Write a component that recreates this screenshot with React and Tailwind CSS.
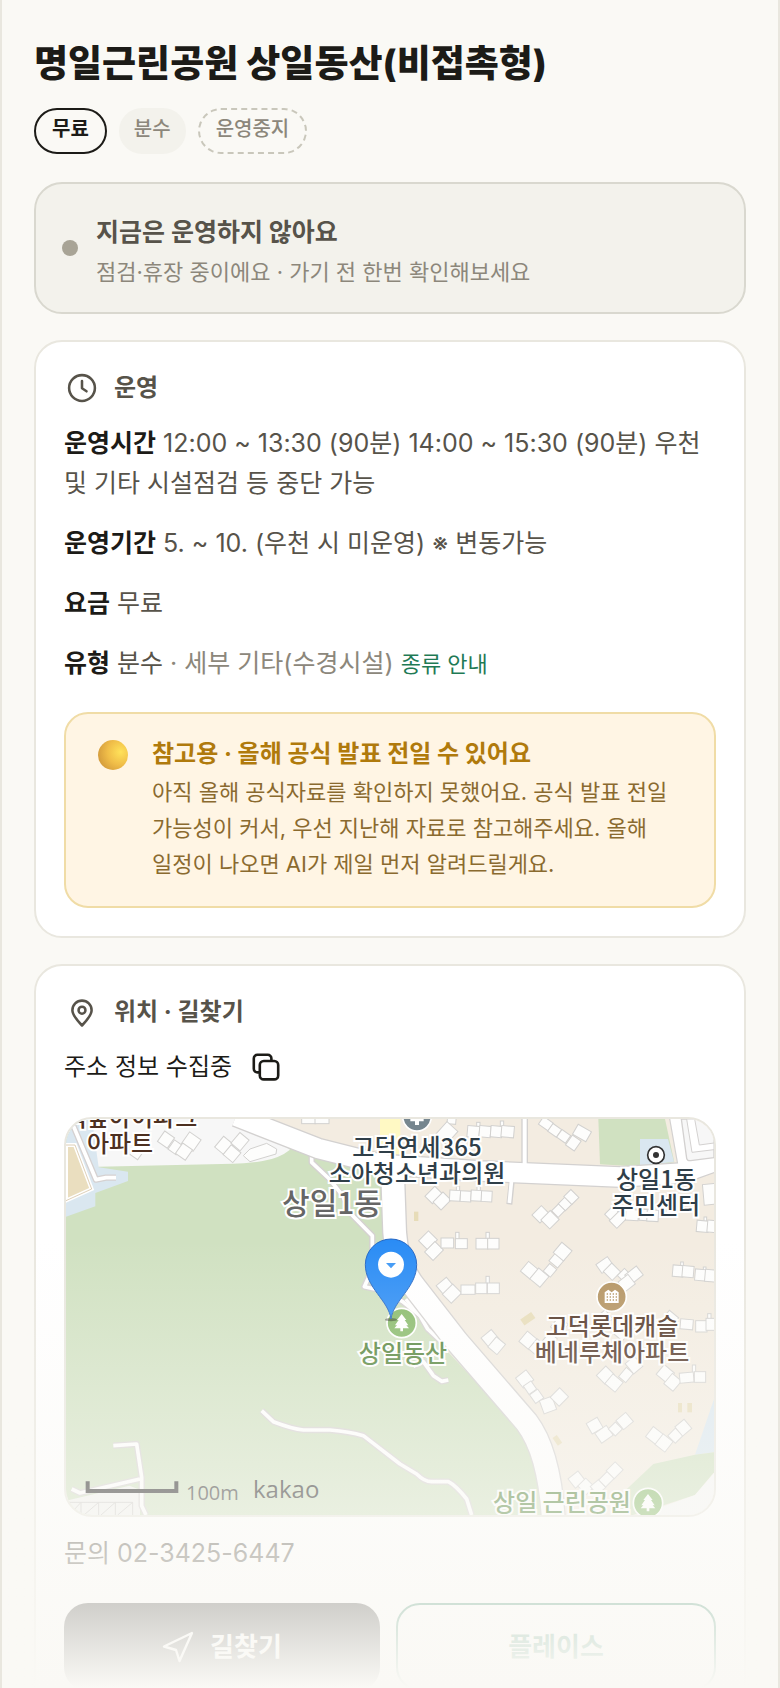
import React from "react";

// [cx, cy, width, height, rotation]
const buildings = [
    [300, 62, 36, 38, 35], [328, 85, 30, 34, 35], [376, 68, 42, 42, 35], [354, 98, 36, 38, 35],
    [474, 80, 38, 42, 40], [522, 68, 36, 42, 40], [498, 104, 38, 38, 40], [212, 102, 28, 30, 35],
    [728, 4, 42, 20, 0], [768, 4, 42, 20, 0],
    [1157, 2, 26, 26, 5], [1142, 42, 52, 44, -48],
    [1222, 38, 36, 34, 5], [1257, 38, 34, 34, 5], [1291, 38, 34, 34, 5], [1325, 38, 38, 34, 5],
    [1440, 14, 36, 28, 35], [1466, 34, 32, 28, 35], [1493, 52, 32, 28, 35], [1522, 72, 32, 36, 35], [1548, 42, 46, 34, 30],
    [1103, 228, 32, 42, 45], [1128, 246, 34, 42, 45],
    [1167, 230, 32, 32, 3], [1199, 232, 32, 32, 3], [1231, 230, 32, 32, 3], [1262, 232, 32, 32, 3],
    [1424, 286, 34, 40, 45], [1452, 302, 38, 40, 45], [1478, 274, 32, 28, -45], [1498, 254, 30, 30, -45], [1516, 234, 34, 30, 45],
    [1640, 286, 34, 34, 45], [1656, 302, 32, 42, 45], [1698, 288, 38, 32, 3], [1738, 288, 36, 34, 3], [1760, 290, 34, 34, 3],
    [1910, 322, 36, 34, 5], [1938, 322, 28, 36, 5], [1932, 226, 40, 62, -5],
    [1086, 364, 42, 38, -45], [1104, 396, 36, 44, 45], [1144, 372, 38, 30, 0], [1186, 374, 36, 30, 0],
    [1248, 374, 36, 32, 0], [1282, 374, 34, 32, 0],
    [1390, 454, 38, 38, 40], [1420, 476, 40, 42, 40], [1452, 454, 30, 28, -50], [1472, 424, 32, 34, -50], [1490, 398, 40, 40, 40],
    [1616, 438, 42, 32, -35], [1638, 458, 38, 36, 45], [1676, 470, 32, 30, 45], [1704, 468, 44, 34, -38], [1682, 492, 38, 36, -38],
    [1836, 456, 32, 34, 5], [1866, 458, 34, 34, 5], [1904, 468, 34, 34, 5], [1932, 470, 30, 36, 5],
    [1138, 502, 40, 38, -40], [1158, 524, 38, 44, 45], [1206, 512, 42, 28, 0], [1246, 508, 34, 32, 0], [1282, 508, 36, 32, 0],
    [1272, 658, 40, 36, -40], [1292, 680, 36, 40, 40],
    [1386, 664, 38, 40, 40], [1414, 686, 36, 40, 40], [1450, 664, 38, 30, -50], [1480, 620, 36, 40, 40],
    [1612, 600, 44, 36, -40], [1666, 640, 38, 36, 40],
    [1810, 602, 36, 44, 40], [1862, 616, 38, 30, 5], [1906, 622, 34, 34, 0], [1934, 616, 28, 36, 0],
    [1376, 780, 40, 38, -38], [1392, 806, 28, 30, -35], [1412, 832, 30, 32, -35], [1446, 858, 40, 42, -20], [1480, 834, 38, 40, 45],
    [1618, 768, 36, 40, 45], [1644, 792, 40, 38, 40], [1680, 768, 36, 28, -50], [1704, 738, 36, 40, -40],
    [1798, 764, 40, 38, 40], [1820, 790, 36, 40, 40], [1862, 776, 42, 30, -5], [1902, 774, 34, 32, 0],
    [1586, 920, 38, 36, -30], [1614, 946, 42, 36, -35], [1648, 930, 30, 30, -45], [1676, 906, 38, 36, -40],
    [1766, 950, 40, 38, 38], [1794, 972, 38, 40, 38], [1828, 950, 32, 32, -45], [1852, 926, 36, 36, -40],
    [1532, 1082, 38, 36, -38], [1560, 1102, 36, 34, 45], [1596, 1104, 34, 32, -40], [1622, 1080, 38, 30, -45], [1646, 1054, 34, 38, 45],
];

const chimneys = [
    [1237, 22, 10, 24], [1308, 18, 10, 24], [1176, 212, 10, 20], [1238, 212, 10, 20],
    [1174, 352, 10, 24], [1265, 352, 10, 24], [1265, 484, 10, 24], [1884, 760, 10, 44], [1930, 604, 10, 40],
    [1848, 440, 8, 22], [1916, 454, 8, 20], [1918, 304, 8, 20],
];

const trails = [
    "M737 105V130L790 180L830 230L852 282L919 350V450L895 503L950 515L1010 548L1062 590",
    "M1020 540L1062 590L1085 630L1130 672",
    "M1042 742L1072 728L1102 770L1127 787L1147 783",
    "M587 875L622 908Q680 930 712 933H792Q850 938 892 950L1002 1035L1052 1065Q1075 1088 1097 1088H1147Q1170 1100 1202 1140L1217 1188",
    "M142 980L212 975L227 1075V1160L240 1188",
    "M17 1110L42 1122L222 1080",
    "M22 20L90 182L120 176H150",
];

const labelClass = "absolute -translate-x-1/2 whitespace-nowrap text-center font-medium text-2xl leading-[26px] [-webkit-text-stroke:4px_white] [paint-order:stroke_fill]";

function Tree({ x, y }) {
    return (
        <g transform={`translate(${x} ${y})`}>
            <circle r="44" fill="#86b968" stroke="#fff" strokeWidth="5" />
            <path d="M0 -27L14 -9H9L20 7H14L22 16H4V25H-4V16H-22L-14 7H-20L-9 -9H-14Z" fill="#fff" />
        </g>
    );
}

function MapDrawing() {
    return (
        <svg viewBox="0 0 1944 1188" preserveAspectRatio="xMidYMid slice" className="block h-full w-full" aria-hidden="true">
            <rect width="1944" height="1188" fill="#f3ece1" />

            {/* ground */}
            <path d="M0 0H700L735 105L950 150L960 360L1000 480L1147 700L1352 920Q1417 1010 1432 1188H0Z" fill="#d0e1c1" />
            <path d="M0 0H560L672 92Q640 118 590 126T500 134L95 143Z" fill="#f7f7f7" />
            <path d="M0 0H78L98 145L186 158V186L88 222V262L0 293Z" fill="#dae7f0" />
            <path d="M0 78H27L77 210L0 245Z" fill="#eadebf" stroke="#fff" strokeWidth="12" />
            <path d="M0 78H27L77 210L0 245" fill="none" stroke="#cdb896" strokeWidth="2" />
            <path d="M560 -10L780 75L950 122V-10Z" fill="#f3ece1" />
            <path d="M942 0H1003V112L942 95Z" fill="#fff9c4" />
            <path d="M1597 0H1797L1825 130L1700 142L1602 136Z" fill="#d0e1c1" />
            <path d="M1722 60H1806L1824 128L1722 140Z" fill="#dae7f0" />
            <path d="M1887 1007L1944 840V1000Z" fill="#dae7f0" />
            <path d="M1677 1115L1762 1035L1887 1007L1944 1000V1060L1887 1128L1742 1175L1700 1188H1640Z" fill="#d0e1c1" />
            <path d="M1944 1062L1887 1128L1720 1188H1944Z" fill="#f7f7f7" />
            <path d="M0 1145L190 1100L222 1112V1188H0Z" fill="#f2f2f0" />
            <path d="M5 1150H200V1188M45 1150V1188M98 1150V1188M148 1150V1188M10 1188L45 1150M54 1188L98 1150M105 1188L148 1150M155 1188L200 1150" fill="none" stroke="#cccac8" strokeWidth="3" />

            {/* trails */}
            <g fill="none" strokeLinejoin="round">
                {trails.map((d) => <path key={d} d={d} stroke="#d5d1d1" strokeWidth="19" />)}
                {trails.map((d) => <path key={d} d={d} stroke="#fff" strokeWidth="11" />)}
            </g>

            {/* roads */}
            <g fill="none" stroke="#d3d1d0" strokeLinejoin="round">
                <path d="M510 -8L755 88L945 136L1242 156L1662 174L1850 162L1960 122" strokeWidth="66" />
                <path d="M979 140L986 340Q992 440 1050 510L1173 668L1382 910Q1450 1000 1462 1200" strokeWidth="76" />
                <path d="M1376 -10V150" strokeWidth="20" />
                <path d="M1338 180L1330 256" strokeWidth="18" />
                <path d="M1832 -10L1862 160" strokeWidth="48" />
            </g>
            <g fill="none" stroke="#fff" strokeLinejoin="round">
                <path d="M510 -8L755 88L945 136L1242 156L1662 174L1850 162L1960 122" strokeWidth="58" />
                <path d="M979 140L986 340Q992 440 1050 510L1173 668L1382 910Q1450 1000 1462 1200" strokeWidth="68" />
                <path d="M1376 -10V150" strokeWidth="12" />
                <path d="M1338 170L1330 252" strokeWidth="11" />
                <path d="M1832 -10L1862 160" strokeWidth="41" />
            </g>
            <path d="M1846 0L1862 118Q1864 126 1874 125L1944 116V0Z" fill="#f7f7f7" stroke="#d3d1d0" strokeWidth="4" />
            <path d="M1862 0L1878 100L1944 92V72L1900 78L1886 0Z" fill="#fff" stroke="#d3d1d0" strokeWidth="3" />

            {/* houses */}
            <g fill="#fdfdfc" stroke="#d2d1cf" strokeWidth="3">
                {chimneys.map(([cx, cy, w, h]) => (
                    <rect key={`${cx}-${cy}`} x={cx - w / 2} y={cy - h / 2} width={w} height={h} />
                ))}
                {buildings.map(([cx, cy, w, h, r]) => (
                    <rect key={`${cx}-${cy}`} x={cx - w / 2} y={cy - h / 2} width={w} height={h} transform={`rotate(${r} ${cx} ${cy})`} />
                ))}
                <path d="M532 110L552 90L602 73L632 90L630 105L552 128Z" />
            </g>
            <g fill="#e7dcb8">
                <rect x="1044" y="278" width="13" height="28" />
                <rect x="1366" y="588" width="40" height="22" transform="rotate(-35 1386 600)" />
                <rect x="1836" y="852" width="12" height="28" />
                <rect x="1864" y="852" width="14" height="28" />
                <rect x="1466" y="950" width="16" height="28" transform="rotate(-35 1474 964)" />
            </g>

            {/* places */}
            <circle cx="1053" cy="-7" r="43" fill="#76868f" stroke="#fff" strokeWidth="5" />
            <path d="M1047 -30H1059V-5H1073V7H1059V18H1047V7H1033V-5H1047Z" fill="#fff" />
            <circle cx="1770" cy="108" r="25" fill="#fff" stroke="#333" strokeWidth="5" />
            <circle cx="1770" cy="108" r="9" fill="#333" />
            <circle cx="1637" cy="533" r="44" fill="#b3925f" stroke="#fff" strokeWidth="5" />
            <path d="M1616 552V520L1627 512L1637 520L1647 512L1658 520V552Z" fill="#fff" />
            <path d="M1622 525H1654M1622 534H1654M1622 543H1654" stroke="#b3925f" strokeWidth="4" strokeDasharray="4 5" />
            <Tree x={1007} y={612} />
            <Tree x={1746} y={1152} />

            {/* marker */}
            <ellipse cx="975" cy="602" rx="18" ry="5" fill="#000" opacity="0.4" />
            <path d="M975 600C968 545 898 505 898 437A77 77 0 0 1 1052 437C1052 505 982 545 975 600Z" fill="#2a8cf5" stroke="#2366c4" strokeWidth="3" />
            <circle cx="975" cy="437" r="39" fill="#fff" />
            <path d="M960 432H990L975 448Z" fill="#3d97f5" />

            <path d="M65 1087V1116H331V1087" fill="none" stroke="#1f1f1f" strokeWidth="12" />
        </svg>
    );
}

function ClockIcon() {
    return (
        <svg viewBox="0 0 24 24" className="size-9" fill="none" stroke="currentColor" strokeWidth="1.7" strokeLinecap="round" strokeLinejoin="round" aria-hidden="true">
            <circle cx="12" cy="12" r="8.6" />
            <path d="M12 7.4V12.2L15 14.2" />
        </svg>
    );
}

function PinIcon() {
    return (
        <svg viewBox="0 0 24 24" className="size-9" fill="none" stroke="currentColor" strokeWidth="1.7" strokeLinecap="round" strokeLinejoin="round" aria-hidden="true">
            <path d="M12 21C8.200 17 5.600 14 5.600 10.800A6.400 6.400 0 0 1 18.400 10.800C18.400 14 15.800 17 12 21Z" />
            <circle cx="12" cy="10.800" r="2.300" />
        </svg>
    );
}

function CopyIcon() {
    return (
        <svg viewBox="0 0 28 28" className="size-7" fill="none" stroke="currentColor" strokeWidth="2.6" strokeLinecap="round" strokeLinejoin="round" aria-hidden="true">
            <rect x="7.800" y="8" width="18.400" height="18.400" rx="4" />
            <path d="M7.600 19.400H5.400A3.600 3.600 0 0 1 1.800 15.800V5.400A3.600 3.600 0 0 1 5.400 1.800H15.800A3.600 3.600 0 0 1 19.400 5.400V7.800" />
        </svg>
    );
}

function RouteIcon() {
    return (
        <svg viewBox="0 0 32 32" className="size-8" fill="none" stroke="currentColor" strokeWidth="2.400" strokeLinejoin="round" aria-hidden="true">
            <path d="M30 2L2 15.500L14 19L17.500 30Z" />
        </svg>
    );
}

function Card({ icon, title, children }) {
    return (
        <section className="rounded-[28px] border-2 border-[#e9e7df] bg-white p-7">
            <h2 className="mb-[17px] flex items-center gap-3.5 text-2xl leading-9 font-bold text-[#57534a]">
                {icon}
                {title}
            </h2>
            {children}
        </section>
    );
}

function InfoRow({ label, children }) {
    return (
        <p>
            <strong className="font-bold text-[#1c1b17]">{label}</strong> {children}
        </p>
    );
}

function App() {
    return (
        <div className="relative h-screen overflow-hidden border-x-2 border-[#e9e7df] bg-[#faf9f5] px-8 pt-[38px] text-[#1c1b17] [font-family:Inter,'Noto_Sans_CJK_KR',sans-serif]">
            <h1 className="text-[37px] leading-[52px] font-extrabold">명일근린공원 상일동산(비접촉형)</h1>

            <div className="mt-[18px] flex gap-3 text-xl leading-[38px]">
                <span className="h-[46px] rounded-full border-2 border-[#1c1b17] px-4 font-bold">무료</span>
                <span className="h-[46px] rounded-full border-2 border-[#f3f2ec] bg-[#f3f2ec] px-[13px] font-medium text-[#8c877b]">분수</span>
                <span className="h-[46px] rounded-full border-2 border-dashed border-[#c9c7bb] px-4 font-medium text-[#8c877b]">운영중지</span>
            </div>

            <div className="mt-7 flex items-center gap-[18px] rounded-[28px] border-2 border-[#d9d8cf] bg-[#f3f2ec] px-[26px] pt-7 pb-6">
                <span className="mb-1 size-4 rounded-full bg-[#a8a496]" />
                <div>
                    <p className="text-[25px] leading-10 font-bold text-[#57534a]">지금은 운영하지 않아요</p>
                    <p className="mt-1 text-[22px] leading-8 text-[#8c877b]">점검·휴장 중이에요 · 가기 전 한번 확인해보세요</p>
                </div>
            </div>

            <main className="mt-[26px] flex flex-col gap-[26px]">
                <Card icon={<ClockIcon />} title="운영">
                    <div className="flex flex-col gap-5 text-[25px] leading-10 text-[#57534a]">
                        <InfoRow label="운영시간">
                            12:00 ~ 13:30 (90분) 14:00 ~ 15:30 (90분) 우천<br />및 기타 시설점검 등 중단 가능
                        </InfoRow>
                        <InfoRow label="운영기간">5. ~ 10. (우천 시 미운영) ※ 변동가능</InfoRow>
                        <InfoRow label="요금">무료</InfoRow>
                        <InfoRow label="유형">
                            분수 <span className="text-[#8c877b]">· 세부 기타(수경시설)</span>{" "}
                            <a href="#types" className="text-[22px] text-[#1f7a55]">종류 안내</a>
                        </InfoRow>
                    </div>

                    <div className="mt-7 flex gap-6 rounded-3xl border-2 border-[#f0dca6] bg-[#fff5e4] pt-5 pr-6 pb-6 pl-8">
                        <span className="mt-1.5 size-[30px] shrink-0 rounded-full bg-[radial-gradient(circle_at_75%_40%,#ffe25a_0%,#f0bd48_45%,#d49c3c_80%,#d08060_100%)]" />
                        <div>
                            <h3 className="text-2xl leading-10 font-bold text-[#b07a0c]">참고용 · 올해 공식 발표 전일 수 있어요</h3>
                            <p className="text-[22px] leading-9 text-[#8a6a2f]">
                                아직 올해 공식자료를 확인하지 못했어요. 공식 발표 전일<br />
                                가능성이 커서, 우선 지난해 자료로 참고해주세요. 올해<br />
                                일정이 나오면 AI가 제일 먼저 알려드릴게요.
                            </p>
                        </div>
                    </div>
                </Card>

                <Card icon={<PinIcon />} title="위치 · 길찾기">
                    <div className="flex items-center gap-5 text-2xl leading-10">
                        <span>주소 정보 수집중</span>
                        <button type="button" aria-label="주소 복사">
                            <CopyIcon />
                        </button>
                    </div>

                    <div className="relative mt-[30px] h-[400px] overflow-hidden rounded-[28px] border-2 border-[#e9e7df] [font-family:'Noto_Sans_CJK_KR',sans-serif]">
                        <MapDrawing />
                        <span className={`${labelClass} left-[54px] -top-4 text-[#4d3021]`}>고덕숲아이파크<br />아파트</span>
                        <span className={`${labelClass} left-[351px] top-3.5 text-[#2f3e48]`}>고덕연세365<br />소아청소년과의원</span>
                        <span className="absolute top-[62px] left-[266px] -translate-x-1/2 text-3xl leading-10 font-medium whitespace-nowrap text-[#666] [-webkit-text-stroke:4px_white] [paint-order:stroke_fill]">상일1동</span>
                        <span className={`${labelClass} left-[590px] top-[46px] text-[#2f3e48]`}>상일1동<br />주민센터</span>
                        <span className={`${labelClass} left-[546px] top-[193px] text-[#4d3021]`}>고덕롯데캐슬<br />베네루체아파트</span>
                        <span className={`${labelClass} left-[337px] top-[220px] text-[#4f8136]`}>상일동산</span>
                        <span className={`${labelClass} left-[496px] top-[369px] text-[#4f8136]`}>상일 근린공원</span>
                        <span className="absolute bottom-2 left-[120px] text-xl leading-7 text-[#333] [font-family:'Open_Sans',sans-serif]">100m</span>
                        <span className="absolute bottom-2.5 left-[187px] text-2xl leading-8 text-[#222] [font-family:'Open_Sans',sans-serif]">kakao</span>
                    </div>

                    <p className="mt-4 text-[25px] leading-10 text-[#57534a]">문의 02-3425-6447</p>

                    <div className="mt-[30px] grid grid-cols-[316fr_320fr] gap-4 text-[26px] leading-10 font-bold">
                        <button type="button" className="flex h-[88px] items-center justify-center gap-4 rounded-3xl bg-[#1c1b17] text-white">
                            <RouteIcon />
                            길찾기
                        </button>
                        <button type="button" className="h-[88px] rounded-3xl border-2 border-[#1f7a55] bg-white text-[#1f7a55]">플레이스</button>
                    </div>
                </Card>
            </main>

            {/* fade over the folded part of the page */}
            <div className="pointer-events-none absolute inset-x-0 bottom-0 h-[448px] bg-linear-to-b from-[#faf9f5]/0 to-[#faf9f5]" />
        </div>
    );
}

export default App;
